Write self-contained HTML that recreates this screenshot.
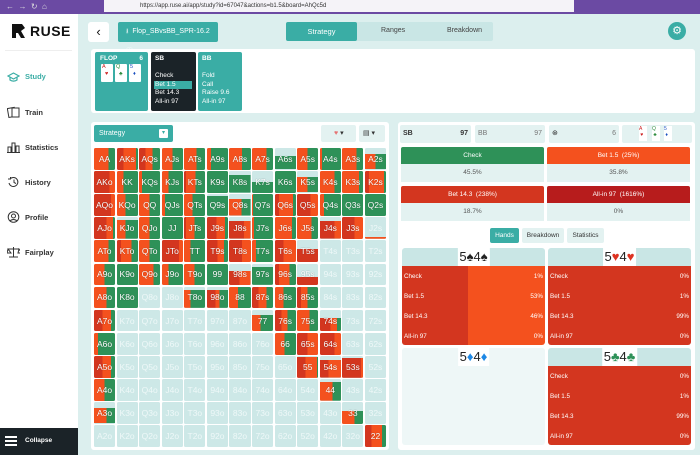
<!DOCTYPE html>
<html><head><meta charset="utf-8"><style>
*{box-sizing:border-box;margin:0;padding:0}
body{width:700px;height:455px;overflow:hidden;font-family:"Liberation Sans",sans-serif;background:#dcefee;position:relative;--r:#d3361f;--o:#f4511e;--g:#2e9158;--e:#cde8e7}
.a{position:absolute}
.top{left:0;top:0;width:700px;height:14px;background:#6b4aa3}
.url{left:104px;top:0;width:470px;height:12px;background:#f5f3f8;font-size:6px;color:#333;padding:3px 0 0 36px}
.side{left:0;top:14px;width:78px;height:441px;background:#fff}
.nav{left:7px;font-size:7.5px;font-weight:bold;color:#333;display:flex;align-items:center;gap:5px}
.btn{background:#3aada5;color:#fff;border-radius:2px}
.cell{display:grid;grid-template-columns:repeat(13,1fr);gap:1.5px;left:94px;top:148px;width:292px;height:299px;grid-template-rows:repeat(13,1fr)}
.cell div{border-radius:1.5px;color:#fff;font-size:8.5px;display:flex;align-items:center;justify-content:center;text-shadow:0 0 1px rgba(0,0,0,.4);background:var(--e)}
.cell div.e{color:#eef8f8;text-shadow:none}
.w{background:#fff;border-radius:3px}
.hb{background:#e3f2f1;border-radius:2px;font-size:7px;color:#333}
.act{color:#fff;font-size:6.5px;text-align:center;line-height:17px;border-radius:2px 2px 0 0}
.val{background:#e3f2f1;font-size:6.5px;color:#555;text-align:center;line-height:18px}
.hand{border-radius:3px;overflow:hidden}
.hh{height:18px;background:#c9e6e5;position:relative}
.hl{position:absolute;left:50%;transform:translateX(-50%);top:0;background:#fff;font-size:13px;padding:0 2px;line-height:18px;color:#222;white-space:nowrap}
.rows div{display:flex;justify-content:space-between;color:#fff;font-size:6.3px;height:20px;align-items:center;padding:0 2px}
.fc{position:absolute;top:64px;width:12px;height:18px;background:#fff;font-size:5.5px;padding-left:1px;line-height:7px;border-radius:1px}
</style></head><body>
<div class="a top"></div>
<div class="a url">https://app.ruse.ai/app/study?id=67047&amp;actions=b1.5&amp;board=AhQc5d</div>
<div class="a" style="left:6px;top:2px;color:#ddd;font-size:8px">←&nbsp;&nbsp;→&nbsp;&nbsp;↻&nbsp;&nbsp;⌂</div>
<div class="a side"></div>
<svg class="a" style="left:12px;top:24px" width="14" height="14"><path d="M0 0h10l3 4-4 3 4 7H9L6 9H4v5H0z" fill="#111"/></svg>
<div class="a" style="left:30px;top:23px;font-size:14px;font-weight:900;letter-spacing:.5px;color:#111">RUSE</div>
<div class="a" style="left:5px;top:50px;width:67px;height:1px;background:#eee"></div>
<div class="a nav" style="top:71px;color:#3aada5"><svg width="13" height="11"><path d="M1 5l5.5-3 5.5 3-5.5 3zM3 6v3c2 1.5 5 1.5 7 0V6" stroke="#3aada5" fill="none" stroke-width="1.2"/></svg>Study</div>
<div class="a nav" style="top:106px"><svg width="13" height="12"><rect x="1" y="2" width="7" height="9" stroke="#333" fill="none" transform="rotate(-10 4 6)"/><rect x="5" y="2" width="7" height="9" stroke="#333" fill="#fff"/></svg>Train</div>
<div class="a nav" style="top:141px"><svg width="13" height="12"><path d="M1 11V6h3v5M5 11V2h3v9M9 11V5h3v6M0 11.5h13" stroke="#333" fill="none"/></svg>Statistics</div>
<div class="a nav" style="top:176px"><svg width="13" height="12"><path d="M3 3a4.5 4.5 0 1 1-1 4M1 3h2.5V1M7 3.5v3l2 1" stroke="#333" fill="none"/></svg>History</div>
<div class="a nav" style="top:211px"><svg width="13" height="12"><circle cx="6.5" cy="6" r="5.3" stroke="#333" fill="none"/><circle cx="6.5" cy="5" r="2" stroke="#333" fill="none"/><path d="M3 10c2-2 5-2 7 0" stroke="#333" fill="none"/></svg>Profile</div>
<div class="a nav" style="top:246px"><svg width="13" height="12"><path d="M6.5 1v10M2 11h9M1 3h11M1 3l-1 4h4zM12 3l-1 4h4z" stroke="#333" fill="none"/></svg>Fairplay</div>
<div class="a" style="left:0;top:428px;width:78px;height:27px;background:#1b2328"></div>
<div class="a" style="left:5px;top:436px;width:12px;height:2px;background:#fff;box-shadow:0 4px #fff,0 8px #fff"></div>
<div class="a" style="left:25px;top:437px;color:#fff;font-size:6.5px;font-weight:bold">Collapse</div>

<div class="a w" style="left:88px;top:22px;width:21px;height:20px;font-size:13px;text-align:center;line-height:19px;color:#111">‹</div>
<div class="a btn" style="left:118px;top:22px;width:100px;height:20px;font-size:7px;line-height:20px;padding-left:8px">⭳&nbsp; Flop_SBvsBB_SPR-16.2 ⓘ</div>
<div class="a" style="left:286px;top:22px;width:207px;height:19px;background:#c9e6e5;border-radius:2px"></div>
<div class="a btn" style="left:286px;top:22px;width:71px;height:19px;font-size:7.5px;text-align:center;line-height:19px">Strategy</div>
<div class="a" style="left:381px;top:27px;font-size:7px;color:#444">Ranges</div>
<div class="a" style="left:447px;top:27px;font-size:7px;color:#444">Breakdown</div>
<div class="a" style="left:668px;top:22px;width:18px;height:18px;border-radius:50%;background:#3aada5;color:#fff;font-size:11px;text-align:center;line-height:18px">⚙</div>

<div class="a w" style="left:91px;top:49px;width:604px;height:64px"></div>
<div class="a btn" style="left:95px;top:52px;width:53px;height:59px;font-size:6.5px;font-weight:bold;padding:3px 5px"><span>FLOP</span><span style="float:right">6</span></div>
<div class="fc" style="left:101px;color:#c22">A<br>&nbsp;&nbsp;♥</div>
<div class="fc" style="left:115px;color:#2a8a3a">Q<br>&nbsp;&nbsp;♣</div>
<div class="fc" style="left:129px;color:#1a4fc0">5<br>&nbsp;&nbsp;♦</div>
<div class="a" style="left:151px;top:52px;width:45px;height:59px;background:#1b2328;border-radius:2px;color:#fff;font-size:6.5px;padding:3px 4px;line-height:8.6px"><b>SB</b><br><br>Check<br><span style="display:block;background:#3aada5;margin-left:-1px;padding-left:1px">Bet 1.5</span>Bet 14.3<br>All-in 97</div>
<div class="a btn" style="left:198px;top:52px;width:44px;height:59px;font-size:6.5px;padding:3px 4px;line-height:8.6px"><b>BB</b><br><br>Fold<br>Call<br>Raise 9.6<br>All-in 97</div>

<div class="a w" style="left:91px;top:122px;width:298px;height:328px"></div>
<div class="a btn" style="left:94px;top:125px;width:79px;height:17px;font-size:7px;line-height:17px;padding-left:5px">Strategy<span style="position:absolute;right:5px;top:4px;width:9px;height:9px;background:#fff;border-radius:1px;color:#3aada5;font-size:6px;line-height:9px;text-align:center">▾</span></div>
<div class="a hb" style="left:321px;top:125px;width:35px;height:17px;line-height:17px;padding-left:13px"><span style="color:#e57373">♥</span> ▾</div>
<div class="a hb" style="left:359px;top:125px;width:26px;height:17px;line-height:17px;padding-left:4px">▤ ▾</div>

<div class="a cell">
<div style="background:linear-gradient(90deg,var(--o) 0 70%,var(--g) 0)">AA</div>
<div style="background:linear-gradient(90deg,var(--r) 0 30%,var(--o) 0 90%,var(--g) 0)">AKs</div>
<div style="background:linear-gradient(90deg,var(--r) 0 30%,var(--o) 0 65%,var(--g) 0)">AQs</div>
<div style="background:linear-gradient(90deg,var(--o) 0 50%,var(--g) 0)">AJs</div>
<div style="background:linear-gradient(90deg,var(--o) 0 60%,var(--g) 0)">ATs</div>
<div style="background:linear-gradient(90deg,var(--o) 0 20%,var(--g) 0)">A9s</div>
<div style="background:linear-gradient(90deg,var(--o) 0 60%,var(--g) 0)">A8s</div>
<div style="background:linear-gradient(90deg,var(--o) 0 70%,var(--g) 0)">A7s</div>
<div style="background:linear-gradient(90deg,var(--g) 0 100%) bottom/100% 60% no-repeat,var(--e)">A6s</div>
<div style="background:linear-gradient(90deg,var(--o) 0 50%,var(--g) 0)">A5s</div>
<div style="background:linear-gradient(90deg,var(--o) 0 10%,var(--g) 0)">A4s</div>
<div style="background:linear-gradient(90deg,var(--o) 0 70%,var(--g) 0)">A3s</div>
<div style="background:linear-gradient(90deg,var(--o) 0 50%,var(--g) 0) bottom/100% 70% no-repeat,var(--e)">A2s</div>

<div style="background:linear-gradient(90deg,var(--r) 0 75%,var(--o) 0)">AKo</div>
<div style="background:linear-gradient(90deg,var(--o) 0 30%,var(--g) 0)">KK</div>
<div style="background:linear-gradient(90deg,var(--o) 0 15%,var(--g) 0)">KQs</div>
<div style="background:linear-gradient(90deg,var(--o) 0 30%,var(--g) 0)">KJs</div>
<div style="background:linear-gradient(90deg,var(--r) 0 10%,var(--o) 0 55%,var(--g) 0)">KTs</div>
<div style="background:var(--g)">K9s</div>
<div style="background:linear-gradient(var(--g),var(--g)) bottom/100% 80% no-repeat,var(--e)">K8s</div>
<div style="background:linear-gradient(var(--g),var(--g)) bottom/100% 50% no-repeat,var(--e)">K7s</div>
<div style="background:var(--g)">K6s</div>
<div style="background:linear-gradient(90deg,var(--o) 0 50%,var(--g) 0) bottom/100% 70% no-repeat,var(--e)">K5s</div>
<div style="background:linear-gradient(90deg,var(--o) 0 70%,var(--g) 0)">K4s</div>
<div style="background:linear-gradient(90deg,var(--o) 0 80%,var(--g) 0)">K3s</div>
<div style="background:linear-gradient(90deg,var(--r) 0 20%,var(--o) 0 90%,var(--g) 0)">K2s</div>

<div style="background:linear-gradient(90deg,var(--r) 0 80%,var(--o) 0)">AQo</div>
<div style="background:linear-gradient(90deg,var(--o) 0 40%,var(--g) 0)">KQo</div>
<div style="background:linear-gradient(90deg,var(--o) 0 50%,var(--g) 0)">QQ</div>
<div style="background:linear-gradient(90deg,var(--o) 0 15%,var(--g) 0)">QJs</div>
<div style="background:linear-gradient(90deg,var(--o) 0 40%,var(--g) 0)">QTs</div>
<div style="background:linear-gradient(var(--g),var(--g)) bottom/100% 90% no-repeat,var(--e)">Q9s</div>
<div style="background:linear-gradient(90deg,var(--o) 0 60%,var(--g) 0) bottom/100% 75% no-repeat,var(--e)">Q8s</div>
<div style="background:linear-gradient(90deg,var(--o) 0 5%,var(--g) 0)">Q7s</div>
<div style="background:linear-gradient(90deg,var(--r) 0 20%,var(--o) 0 85%,var(--g) 0)">Q6s</div>
<div style="background:linear-gradient(90deg,var(--r) 0 65%,var(--o) 0)">Q5s</div>
<div style="background:linear-gradient(90deg,var(--o) 0 20%,var(--g) 0)">Q4s</div>
<div style="background:var(--g)">Q3s</div>
<div style="background:var(--g)">Q2s</div>

<div style="background:linear-gradient(90deg,var(--r) 0 60%,var(--o) 0 90%,var(--g) 0)">AJo</div>
<div style="background:linear-gradient(90deg,var(--o) 0 40%,var(--g) 0) bottom/100% 85% no-repeat,var(--e)">KJo</div>
<div style="background:linear-gradient(90deg,var(--o) 0 50%,var(--g) 0)">QJo</div>
<div style="background:var(--g)">JJ</div>
<div style="background:linear-gradient(90deg,var(--r) 0 10%,var(--o) 0 50%,var(--g) 0)">JTs</div>
<div style="background:linear-gradient(90deg,var(--r) 0 45%,var(--o) 0 85%,var(--g) 0)">J9s</div>
<div style="background:linear-gradient(90deg,var(--r) 0 70%,var(--o) 0) bottom/100% 80% no-repeat,var(--e)">J8s</div>
<div style="background:linear-gradient(90deg,var(--o) 0 10%,var(--g) 0)">J7s</div>
<div style="background:linear-gradient(90deg,var(--o) 0 80%,var(--g) 0)">J6s</div>
<div style="background:linear-gradient(90deg,var(--o) 0 70%,var(--g) 0)">J5s</div>
<div style="background:linear-gradient(90deg,var(--r) 0 70%,var(--o) 0) bottom/100% 80% no-repeat,var(--e)">J4s</div>
<div style="background:linear-gradient(90deg,var(--r) 0 60%,var(--o) 0)">J3s</div>
<div class="e" style="background:linear-gradient(var(--o),var(--o)) bottom/100% 8% no-repeat,var(--e)">J2s</div>

<div style="background:linear-gradient(90deg,var(--o) 0 70%,var(--g) 0)">ATo</div>
<div style="background:linear-gradient(90deg,var(--r) 0 20%,var(--o) 0 70%,var(--g) 0)">KTo</div>
<div style="background:linear-gradient(90deg,var(--o) 0 50%,var(--g) 0)">QTo</div>
<div style="background:linear-gradient(90deg,var(--r) 0 80%,var(--o) 0)">JTo</div>
<div style="background:linear-gradient(90deg,var(--o) 0 30%,var(--g) 0)">TT</div>
<div style="background:linear-gradient(90deg,var(--r) 0 50%,var(--o) 0 80%,var(--g) 0)">T9s</div>
<div style="background:linear-gradient(90deg,var(--r) 0 60%,var(--o) 0)">T8s</div>
<div style="background:linear-gradient(90deg,var(--o) 0 20%,var(--g) 0)">T7s</div>
<div style="background:linear-gradient(90deg,var(--r) 0 40%,var(--o) 0)">T6s</div>
<div style="background:linear-gradient(var(--r),var(--r)) bottom/100% 60% no-repeat,var(--e)">T5s</div>
<div class="e">T4s</div><div class="e">T3s</div><div class="e">T2s</div>

<div style="background:linear-gradient(90deg,var(--o) 0 50%,var(--g) 0)">A9o</div>
<div style="background:var(--g)">K9o</div>
<div style="background:linear-gradient(90deg,var(--o) 0 70%,var(--g) 0)">Q9o</div>
<div style="background:linear-gradient(90deg,var(--o) 0 30%,var(--g) 0)">J9o</div>
<div style="background:linear-gradient(90deg,var(--o) 0 50%,var(--g) 0)">T9o</div>
<div style="background:var(--g)">99</div>
<div style="background:linear-gradient(90deg,var(--r) 0 50%,var(--o) 0) bottom/100% 70% no-repeat,var(--e)">98s</div>
<div style="background:linear-gradient(var(--g),var(--g)) bottom/100% 85% no-repeat,var(--e)">97s</div>
<div style="background:linear-gradient(90deg,var(--r) 0 20%,var(--o) 0 70%,var(--g) 0)">96s</div>
<div style="background:linear-gradient(var(--r),var(--r)) bottom/100% 40% no-repeat,var(--e)">95s</div>
<div class="e">94s</div><div class="e">93s</div><div class="e">92s</div>

<div style="background:linear-gradient(90deg,var(--o) 0 60%,var(--g) 0)">A8o</div>
<div style="background:var(--g)">K8o</div>
<div class="e">Q8o</div><div class="e">J8o</div>
<div style="background:linear-gradient(90deg,var(--o) 0 30%,var(--g) 0) bottom/100% 85% no-repeat,var(--e)">T8o</div>
<div style="background:linear-gradient(90deg,var(--r) 0 40%,var(--o) 0 60%,var(--g) 0) bottom/100% 85% no-repeat,var(--e)">98o</div>
<div style="background:linear-gradient(90deg,var(--o) 0 40%,var(--g) 0)">88</div>
<div style="background:linear-gradient(90deg,var(--r) 0 30%,var(--o) 0 70%,var(--g) 0)">87s</div>
<div style="background:linear-gradient(90deg,var(--o) 0 40%,var(--g) 0)">86s</div>
<div style="background:linear-gradient(90deg,var(--r) 0 20%,var(--o) 0 50%,var(--g) 0)">85s</div>
<div class="e">84s</div><div class="e">83s</div><div class="e">82s</div>

<div style="background:linear-gradient(90deg,var(--r) 0 40%,var(--o) 0 80%,var(--g) 0)">A7o</div>
<div class="e">K7o</div><div class="e">Q7o</div><div class="e">J7o</div><div class="e">T7o</div><div class="e">97o</div><div class="e">87o</div>
<div style="background:linear-gradient(90deg,var(--o) 0 40%,var(--g) 0) bottom/100% 80% no-repeat,var(--e)">77</div>
<div style="background:linear-gradient(90deg,var(--r) 0 30%,var(--o) 0 60%,var(--g) 0)">76s</div>
<div style="background:linear-gradient(90deg,var(--o) 0 60%,var(--g) 0)">75s</div>
<div style="background:linear-gradient(90deg,var(--r) 0 50%,var(--o) 0 80%,var(--g) 0) bottom/100% 65% no-repeat,var(--e)">74s</div>
<div class="e">73s</div><div class="e">72s</div>

<div style="background:linear-gradient(90deg,var(--o) 0 20%,var(--g) 0)">A6o</div>
<div class="e">K6o</div><div class="e">Q6o</div><div class="e">J6o</div><div class="e">T6o</div><div class="e">96o</div><div class="e">86o</div><div class="e">76o</div>
<div style="background:linear-gradient(90deg,var(--o) 0 45%,var(--g) 0)">66</div>
<div style="background:linear-gradient(90deg,var(--r) 0 50%,var(--o) 0)">65s</div>
<div style="background:linear-gradient(90deg,var(--r) 0 70%,var(--o) 0)">64s</div>
<div class="e">63s</div><div class="e">62s</div>

<div style="background:linear-gradient(90deg,var(--r) 0 40%,var(--o) 0 80%,var(--g) 0)">A5o</div>
<div class="e">K5o</div><div class="e">Q5o</div><div class="e">J5o</div><div class="e">T5o</div><div class="e">95o</div><div class="e">85o</div><div class="e">75o</div><div class="e">65o</div>
<div style="background:linear-gradient(90deg,var(--r) 0 40%,var(--o) 0 95%,var(--g) 0) bottom/100% 95% no-repeat,var(--e)">55</div>
<div style="background:linear-gradient(90deg,var(--r) 0 40%,var(--o) 0) bottom/100% 80% no-repeat,var(--e)">54s</div>
<div style="background:linear-gradient(90deg,var(--r) 0 90%,var(--o) 0) bottom/100% 90% no-repeat,var(--e)">53s</div>
<div class="e">52s</div>

<div style="background:linear-gradient(90deg,var(--o) 0 50%,var(--g) 0)">A4o</div>
<div class="e">K4o</div><div class="e">Q4o</div><div class="e">J4o</div><div class="e">T4o</div><div class="e">94o</div><div class="e">84o</div><div class="e">74o</div><div class="e">64o</div><div class="e">54o</div>
<div style="background:linear-gradient(90deg,var(--o) 0 60%,var(--g) 0) bottom/100% 85% no-repeat,var(--e)">44</div>
<div class="e">43s</div><div class="e">42s</div>

<div style="background:linear-gradient(90deg,var(--o) 0 60%,var(--g) 0) bottom/100% 70% no-repeat,var(--e)">A3o</div>
<div class="e">K3o</div><div class="e">Q3o</div><div class="e">J3o</div><div class="e">T3o</div><div class="e">93o</div><div class="e">83o</div><div class="e">73o</div><div class="e">63o</div><div class="e">53o</div><div class="e">43o</div>
<div style="background:linear-gradient(90deg,var(--o) 0 60%,var(--g) 0) bottom/100% 60% no-repeat,var(--e)">33</div>
<div class="e">32s</div>

<div class="e">A2o</div><div class="e">K2o</div><div class="e">Q2o</div><div class="e">J2o</div><div class="e">T2o</div><div class="e">92o</div><div class="e">82o</div><div class="e">72o</div><div class="e">62o</div><div class="e">52o</div><div class="e">42o</div><div class="e">32o</div>
<div style="background:linear-gradient(90deg,var(--r) 0 30%,var(--o) 0 80%,var(--g) 0)">22</div>
</div>

<div class="a w" style="left:398px;top:122px;width:297px;height:328px"></div>
<div class="a hb" style="left:400px;top:125px;width:71px;height:18px;line-height:18px;padding:0 3px;font-weight:bold">SB<span style="float:right">97</span></div>
<div class="a hb" style="left:475px;top:125px;width:70px;height:18px;line-height:18px;padding:0 3px;color:#777">BB<span style="float:right">97</span></div>
<div class="a hb" style="left:549px;top:125px;width:70px;height:18px;line-height:18px;padding:0 3px;color:#777"><span style="color:#222">⊛</span><span style="float:right">6</span></div>
<div class="a hb" style="left:622px;top:125px;width:70px;height:18px"></div>
<div class="a" style="left:639px;top:126px;width:8px;height:15px;background:#fff;font-size:5px;color:#c22;line-height:6px">A<br>&nbsp;♥</div>
<div class="a" style="left:652px;top:126px;width:8px;height:15px;background:#fff;font-size:5px;color:#2a8a3a;line-height:6px">Q<br>&nbsp;♣</div>
<div class="a" style="left:664px;top:126px;width:8px;height:15px;background:#fff;font-size:5px;color:#1a4fc0;line-height:6px">5<br>&nbsp;♦</div>

<div class="a" style="left:401px;top:147px;width:143px"><div class="act" style="background:#2e9158">Check</div><div class="val">45.5%</div></div>
<div class="a" style="left:547px;top:147px;width:143px"><div class="act" style="background:#f4511e">Bet 1.5 &nbsp;(25%)</div><div class="val">35.8%</div></div>
<div class="a" style="left:401px;top:186px;width:143px"><div class="act" style="background:#d3361f">Bet 14.3 &nbsp;(238%)</div><div class="val">18.7%</div></div>
<div class="a" style="left:547px;top:186px;width:143px"><div class="act" style="background:#b71c1c">All-in 97 &nbsp;(1616%)</div><div class="val">0%</div></div>

<div class="a btn" style="left:490px;top:228px;width:29px;height:15px;font-size:6.5px;text-align:center;line-height:15px">Hands</div>
<div class="a hb" style="left:522px;top:228px;width:42px;height:15px;font-size:6.5px;text-align:center;line-height:15px">Breakdown</div>
<div class="a hb" style="left:567px;top:228px;width:37px;height:15px;font-size:6.5px;text-align:center;line-height:15px">Statistics</div>

<div class="a hand" style="left:402px;top:248px;width:143px;height:97px">
<div class="hh"><div class="hl">5♠4♠</div></div>
<div class="rows" style="background:linear-gradient(90deg,#d3361f 0 46%,#f4511e 0);height:79px"><div><span>Check</span><span>1%</span></div><div><span>Bet 1.5</span><span>53%</span></div><div><span>Bet 14.3</span><span>46%</span></div><div><span>All-in 97</span><span>0%</span></div></div></div>
<div class="a hand" style="left:548px;top:248px;width:143px;height:97px">
<div class="hh"><div class="hl">5<span style="color:#d32">♥</span>4<span style="color:#d32">♥</span></div></div>
<div class="rows" style="background:#d3361f;height:79px"><div><span>Check</span><span>0%</span></div><div><span>Bet 1.5</span><span>1%</span></div><div><span>Bet 14.3</span><span>99%</span></div><div><span>All-in 97</span><span>0%</span></div></div></div>
<div class="a hand" style="left:402px;top:348px;width:143px;height:97px;background:#eef7f7">
<div class="hh" style="background:#eef7f7"><div class="hl">5<span style="color:#1e88e5">♦</span>4<span style="color:#1e88e5">♦</span></div></div></div>
<div class="a hand" style="left:548px;top:348px;width:143px;height:97px">
<div class="hh"><div class="hl">5<span style="color:#2e9158">♣</span>4<span style="color:#2e9158">♣</span></div></div>
<div class="rows" style="background:#d3361f;height:79px"><div><span>Check</span><span>0%</span></div><div><span>Bet 1.5</span><span>1%</span></div><div><span>Bet 14.3</span><span>99%</span></div><div><span>All-in 97</span><span>0%</span></div></div></div>
</body></html>
